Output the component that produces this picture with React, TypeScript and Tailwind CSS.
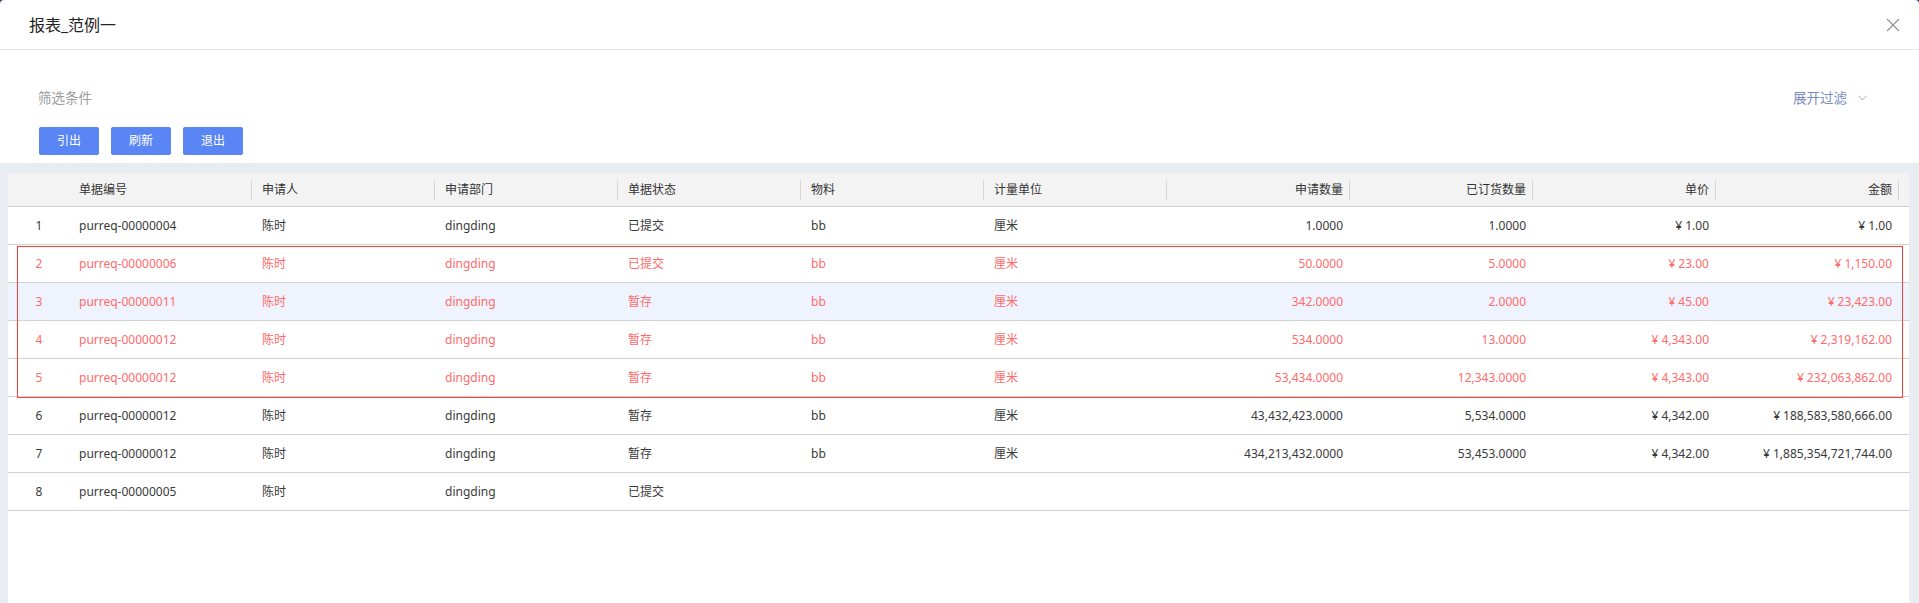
import React from 'react';

type Row = {
  no: string;
  person: string;
  dept: string;
  status: string;
  material: string;
  unit: string;
  qty: string;
  ordered: string;
  price: string;
  amount: string;
  red?: boolean;
  active?: boolean;
};

const rows: Row[] = [
  { no: 'purreq-00000004', person: '陈时', dept: 'dingding', status: '已提交', material: 'bb', unit: '厘米', qty: '1.0000', ordered: '1.0000', price: '¥1.00', amount: '¥1.00' },
  { no: 'purreq-00000006', person: '陈时', dept: 'dingding', status: '已提交', material: 'bb', unit: '厘米', qty: '50.0000', ordered: '5.0000', price: '¥23.00', amount: '¥1,150.00', red: true },
  { no: 'purreq-00000011', person: '陈时', dept: 'dingding', status: '暂存', material: 'bb', unit: '厘米', qty: '342.0000', ordered: '2.0000', price: '¥45.00', amount: '¥23,423.00', red: true, active: true },
  { no: 'purreq-00000012', person: '陈时', dept: 'dingding', status: '暂存', material: 'bb', unit: '厘米', qty: '534.0000', ordered: '13.0000', price: '¥4,343.00', amount: '¥2,319,162.00', red: true },
  { no: 'purreq-00000012', person: '陈时', dept: 'dingding', status: '暂存', material: 'bb', unit: '厘米', qty: '53,434.0000', ordered: '12,343.0000', price: '¥4,343.00', amount: '¥232,063,862.00', red: true },
  { no: 'purreq-00000012', person: '陈时', dept: 'dingding', status: '暂存', material: 'bb', unit: '厘米', qty: '43,432,423.0000', ordered: '5,534.0000', price: '¥4,342.00', amount: '¥188,583,580,666.00' },
  { no: 'purreq-00000012', person: '陈时', dept: 'dingding', status: '暂存', material: 'bb', unit: '厘米', qty: '434,213,432.0000', ordered: '53,453.0000', price: '¥4,342.00', amount: '¥1,885,354,721,744.00' },
  { no: 'purreq-00000005', person: '陈时', dept: 'dingding', status: '已提交', material: '', unit: '', qty: '', ordered: '', price: '', amount: '' },
];

const textCols = ['单据编号', '申请人', '申请部门', '单据状态', '物料', '计量单位'];
const numCols = ['申请数量', '已订货数量', '单价', '金额'];

const grid = 'grid grid-cols-[61px_repeat(10,183px)_1fr]';

function HeadCell({ label, right }: { label: string; right?: boolean }) {
  return (
    <div className="flex items-center h-full">
      <span className={right ? 'flex-1 text-right pr-[6px]' : 'flex-1 pl-[10px]'}>{label}</span>
      <span className="w-px h-[20px] bg-[#d6d6d6]" />
    </div>
  );
}

// money values: yen sign gets a little breathing room like the original
function Money({ value }: { value: string }) {
  if (!value.startsWith('¥')) return <>{value}</>;
  return (
    <>
      <span className="mr-[3px]">¥</span>
      {value.slice(1)}
    </>
  );
}

export default function App() {
  return (
    <div
      className="w-[1919px] h-[603px] bg-[#233a6b] overflow-hidden"
      style={{ fontFamily: '"Noto Sans", "Noto Sans CJK SC", sans-serif' }}
    >
      <div className="h-full bg-white rounded-t-[4px] flex flex-col">
        {/* title bar */}
        <div className="h-[50px] shrink-0 border-b border-[#e8e8e8] flex items-center justify-between pl-[29px] pr-[19px]">
          <span className="text-[16px] text-[#222] leading-none">报表_范例一</span>
          <svg width="14" height="14" viewBox="0 0 14 14" className="text-[#8f8f8f]">
            <path d="M1 1L13 13M13 1L1 13" stroke="currentColor" strokeWidth="1.1" fill="none" />
          </svg>
        </div>

        {/* filter area */}
        <div className="h-[113px] shrink-0 pt-[38px] pl-[38px] pr-[52px]">
          <div className="h-[20px] flex items-center justify-between">
            <span className="text-[13.5px] text-[#9a9a9a]">筛选条件</span>
            <span className="flex items-center gap-[11px] text-[13.5px] text-[#7c8dc2]">
              展开过滤
              <svg width="9" height="6" viewBox="0 0 9 6">
                <path d="M0.5 0.8L4.5 4.8L8.5 0.8" stroke="#9aa6cf" strokeWidth="1" fill="none" />
              </svg>
            </span>
          </div>
          <div className="mt-[19px] flex gap-[12px] pl-px">
            {['引出', '刷新', '退出'].map((b) => (
              <button
                key={b}
                className="w-[60px] h-[28px] rounded-[2px] bg-[#5a86f5] text-white text-[12px] flex items-center justify-center"
              >
                {b}
              </button>
            ))}
          </div>
        </div>

        {/* table area */}
        <div className="flex-1 bg-[#e9edf2] pt-[10px] pl-[8px] pr-[10px]">
          <div className="h-full bg-white text-[12px] text-[#3a3a3a]">
            <div className={`${grid} h-[34px] bg-[#f3f3f3] border-b border-[#cfcfcf] text-[#333]`}>
              <div />
              {textCols.map((c) => (
                <HeadCell key={c} label={c} />
              ))}
              {numCols.map((c) => (
                <HeadCell key={c} label={c} right />
              ))}
              <div />
            </div>

            <div className="relative">
              {rows.map((r, i) => (
                <div
                  key={i}
                  className={`${grid} h-[38px] items-center border-b border-[#d2d2d2] ${
                    r.active ? 'bg-[#eef3fd]' : ''
                  } ${r.red ? 'text-[#ff6b6b]' : ''}`}
                >
                  <div className="text-center pl-px">{i + 1}</div>
                  <div className="pl-[10px]">{r.no}</div>
                  <div className="pl-[10px]">{r.person}</div>
                  <div className="pl-[10px]">{r.dept}</div>
                  <div className="pl-[10px]">{r.status}</div>
                  <div className="pl-[10px]">{r.material}</div>
                  <div className="pl-[10px]">{r.unit}</div>
                  <div className="text-right pr-[7px]">{r.qty}</div>
                  <div className="text-right pr-[7px]">{r.ordered}</div>
                  <div className="text-right pr-[7px]"><Money value={r.price} /></div>
                  <div className="text-right pr-[7px]"><Money value={r.amount} /></div>
                  <div />
                </div>
              ))}
              <div className="absolute left-[9px] right-[6px] top-[39px] h-[152px] border border-[#ff3b3b] pointer-events-none" />
            </div>
          </div>
        </div>
      </div>
    </div>
  );
}
